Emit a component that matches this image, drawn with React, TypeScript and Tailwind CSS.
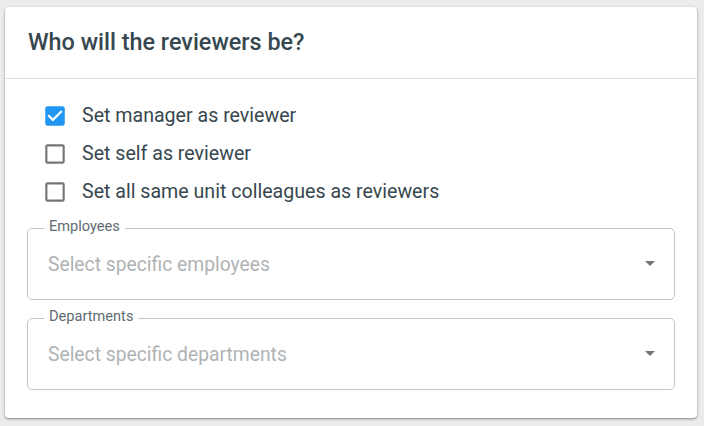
import React from "react";

function Check({ checked }: { checked: boolean }) {
  return (
    <svg width="26" height="26" viewBox="0 0 24 24" className="shrink-0">
      {checked ? (
        <path
          fill="#2196f3"
          d="M19 3H5c-1.11 0-2 .9-2 2v14c0 1.1.89 2 2 2h14c1.11 0 2-.9 2-2V5c0-1.1-.89-2-2-2zm-9 14l-5-5 1.41-1.41L10 14.17l7.59-7.59L19 8l-9 9z"
        />
      ) : (
        <path
          fill="#757575"
          d="M19 5v14H5V5h14m0-2H5c-1.1 0-2 .9-2 2v14c0 1.1.9 2 2 2h14c1.1 0 2-.9 2-2V5c0-1.1-.9-2-2-2z"
        />
      )}
    </svg>
  );
}

function Row({ label, checked }: { label: string; checked: boolean }) {
  return (
    <div className="flex items-center h-[38px]">
      <Check checked={checked} />
      <span className="ml-[14px] text-[19.6px] leading-[24px] text-[#37474f]">{label}</span>
    </div>
  );
}

function Field({ label, placeholder }: { label: string; placeholder: string }) {
  return (
    <div className="relative h-[72px] border border-[#c4c4c4] rounded-[5px] pl-[20px] pr-[12px] flex items-center">
      <span className="absolute left-[16px] top-[-12px] bg-white px-[5px] text-[14.6px] leading-[18px] text-[#5f6b73]">
        {label}
      </span>
      <span className="flex-1 text-[19.3px] leading-[24px] text-[#b0b3b5] mt-[2px]">{placeholder}</span>
      <svg width="24" height="24" viewBox="0 0 24 24" className="-mt-[2px]">
        <path fill="#757575" d="M7 10l5 5 5-5z" />
      </svg>
    </div>
  );
}

export default function App() {
  return (
    <div
      className="w-[704px] h-[426px] bg-[#ececec] pt-[7px] pl-[5px]"
      style={{ fontFamily: "Roboto, 'Liberation Sans', sans-serif" }}
    >
      <div className="w-[692px] h-[411px] bg-white rounded-[4px] shadow-[0_1px_3px_rgba(0,0,0,0.35),0_1px_1px_rgba(0,0,0,0.14)] flex flex-col">
        <div className="h-[72px] border-b border-[#e0e0e0] flex items-center px-[23px]">
          <h2 className="text-[23.4px] leading-[28px] font-medium text-[#37474f] mt-[-2px]">Who will the reviewers be?</h2>
        </div>
        <div className="px-[22px] pt-[18px] flex flex-col">
          <div className="pl-[15px] flex flex-col">
            <Row label="Set manager as reviewer" checked />
            <Row label="Set self as reviewer" checked={false} />
            <Row label="Set all same unit colleagues as reviewers" checked={false} />
          </div>
          <div className="mt-[17px] flex flex-col gap-[18px]">
            <Field label="Employees" placeholder="Select specific employees" />
            <Field label="Departments" placeholder="Select specific departments" />
          </div>
        </div>
      </div>
    </div>
  );
}
